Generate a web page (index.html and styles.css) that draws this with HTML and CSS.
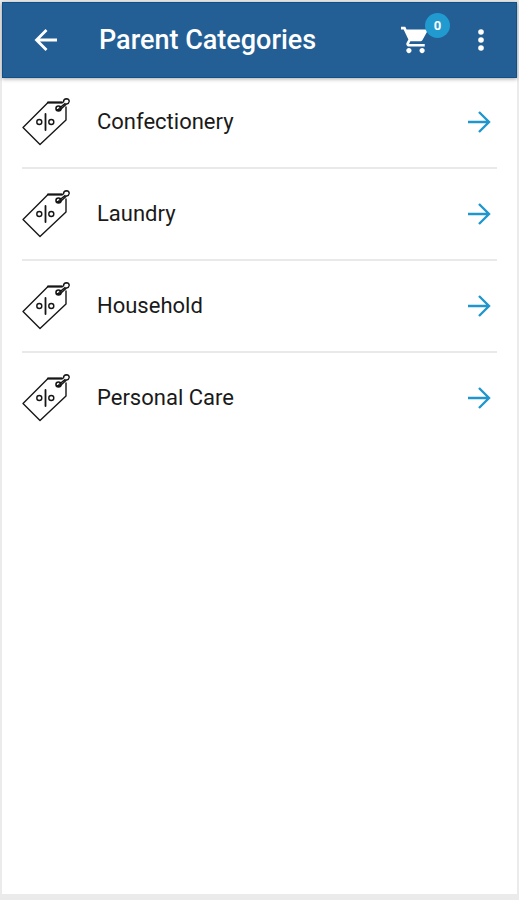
FILE: index.html
```html
<!DOCTYPE html>
<html lang="en">
<head>
<meta charset="utf-8">
<meta name="viewport" content="width=device-width, initial-scale=1">
<title>Parent Categories</title>
<link rel="stylesheet" href="styles.css">
</head>
<body>
<svg class="symbols" aria-hidden="true">
  <symbol id="tag" viewBox="0 0 48 48">
    <g fill="none" stroke="#161616" stroke-width="1.4" stroke-linejoin="round" stroke-linecap="round">
      <path d="M44 9V22L18 46.500L1 29.500L26 4.500H40"/>
      <path d="M26 4.500H40" stroke-width="2.200"/>
      <path d="M37 10.500L43 5.500M41.500 4Q41.500 .8 44.500 .8Q47.300 1 47.200 3.500Q47 5.500 44.500 6L38.500 11.500"/>
      <circle cx="36.500" cy="10.500" r="2.500" stroke-width="1.600"/>
      <path d="M35 12L37.500 12" stroke-width="2"/>
      <circle cx="17.300" cy="24" r="2.500"/>
      <circle cx="29.300" cy="24" r="2.500"/>
      <path d="M23.500 16V32" stroke-width="1.800"/>
    </g>
  </symbol>
  <symbol id="arrow" viewBox="0 0 24 24">
    <path d="M1 12H22M12 2L22 12L12 22" fill="none" stroke="#2196cc" stroke-width="2.400"/>
  </symbol>
</svg>
<div class="screen">
  <header class="bar">
    <button class="icon-button" type="button" aria-label="Back">
      <svg class="back" viewBox="0 0 24 24"><path d="M23 12H3M12.500 2L2.500 12L12.500 22" fill="none" stroke="#fff" stroke-width="2.800"/></svg>
    </button>
    <h1 class="title">Parent Categories</h1>
    <button class="icon-button cart" type="button" aria-label="Cart">
      <svg class="cart-icon" viewBox="1 2 22 20"><path fill="#fff" d="M7 18c-1.100 0-1.990.9-1.990 2S5.900 22 7 22s2-.9 2-2-.9-2-2-2zM1 2v2h2l3.600 7.590-1.350 2.450c-.16.280-.25.610-.25.960 0 1.100.9 2 2 2h12v-2H7.420c-.14 0-.25-.11-.25-.25l.03-.12.900-1.630h7.450c.75 0 1.410-.41 1.750-1.030l3.580-6.490c.08-.14.120-.31.120-.48 0-.55-.45-1-1-1H5.210l-.94-2H1zm16 16c-1.100 0-1.990.9-1.990 2s.89 2 1.990 2 2-.9 2-2-.9-2-2-2z"/></svg>
      <span class="badge">0</span>
    </button>
    <button class="icon-button" type="button" aria-label="More options">
      <svg class="more" viewBox="0 0 8 22"><g fill="#fff"><circle cx="4" cy="3" r="2.800"/><circle cx="4" cy="11" r="2.800"/><circle cx="4" cy="19" r="2.800"/></g></svg>
    </button>
  </header>
  <main>
    <ul class="list">
      <li><a class="row" href="#"><svg class="tag"><use href="#tag"/></svg><span class="name">Confectionery</span><svg class="arrow"><use href="#arrow"/></svg></a></li>
      <li><a class="row" href="#"><svg class="tag"><use href="#tag"/></svg><span class="name">Laundry</span><svg class="arrow"><use href="#arrow"/></svg></a></li>
      <li><a class="row" href="#"><svg class="tag"><use href="#tag"/></svg><span class="name">Household</span><svg class="arrow"><use href="#arrow"/></svg></a></li>
      <li><a class="row" href="#"><svg class="tag"><use href="#tag"/></svg><span class="name">Personal Care</span><svg class="arrow"><use href="#arrow"/></svg></a></li>
    </ul>
  </main>
</div>
</body>
</html>
```
FILE: styles.css
```css
* { box-sizing: border-box; }

body {
  margin: 0;
  min-height: 100vh;
  display: flex;
  padding: 2px 2px 6px;
  background: #ebebeb;
  font-family: Roboto, "Liberation Sans", sans-serif;
  color: #1a1a1a;
}

.symbols { position: absolute; width: 0; height: 0; }

.screen { flex: 1; background: #fff; }

.bar {
  display: flex;
  align-items: center;
  height: 76px;
  padding: 0 12px 0 20px;
  background: #235f94;
  border: 1px solid #0f5089;
  box-shadow: 0 1px 4px rgba(0, 0, 0, .35);
}

.icon-button {
  display: flex;
  align-items: center;
  justify-content: center;
  width: 46px;
  height: 46px;
  padding: 0;
  border: 0;
  background: none;
}

.back { width: 24px; height: 24px; }

.title {
  flex: 1;
  margin: 0;
  padding-left: 30px;
  font-size: 27px;
  font-weight: 500;
  line-height: 32px;
  color: #fff;
}

.cart { position: relative; margin-right: 20px; }
.cart-icon { width: 29px; height: 28px; }

.badge {
  position: absolute;
  top: -4px;
  right: -12px;
  width: 25px;
  height: 25px;
  border-radius: 50%;
  background: #219ad0;
  color: #fff;
  font: 700 13px/25px Roboto, sans-serif;
  text-align: center;
}

.more { width: 8px; height: 22px; }

.list {
  margin: -1px 0 0;
  padding: 0 20px;
  list-style: none;
}

.list li + li { border-top: 2px solid #e9e9e9; }

.row {
  display: flex;
  align-items: center;
  height: 90px;
  color: inherit;
  text-decoration: none;
}

.tag { width: 48px; height: 48px; }
.name { flex: 1; padding-left: 27px; font-size: 22px; line-height: 28px; }
.arrow { width: 24px; height: 24px; margin-right: 6px; }
```
